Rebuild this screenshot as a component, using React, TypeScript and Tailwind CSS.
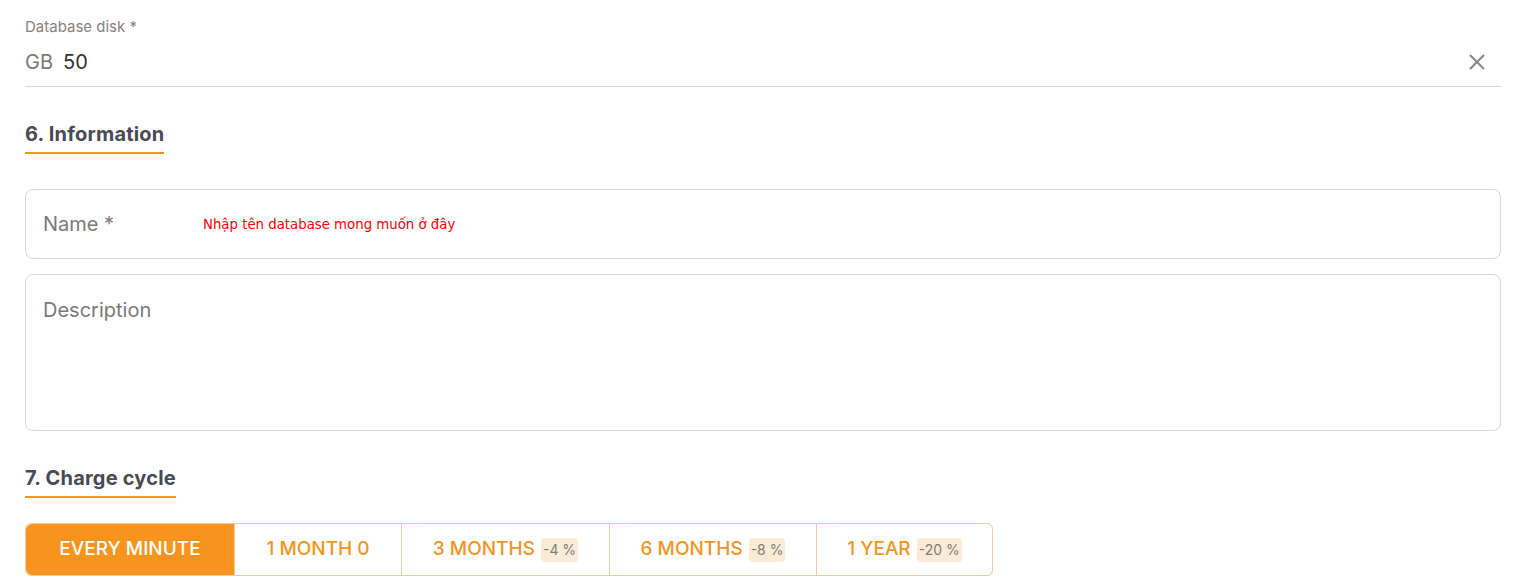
import React from "react";

const font = { fontFamily: "Inter, 'Noto Sans', sans-serif" };

function Tab({ label, badge, active, last }: { label: string; badge?: string; active?: boolean; last?: boolean }) {
  return (
    <div
      className={
        "flex items-center justify-center gap-[6px] h-full " +
        (active
          ? "bg-[#f7941d] text-white rounded-l-[6px]"
          : "text-[#f7941d] border-l border-[#f8c89a]") +
        (last ? " rounded-r-[6px]" : "")
      }
    >
      <span className="text-[19px] font-medium">{label}</span>
      {badge && (
        <span className="bg-[#fbebd6] text-[#7c7c7c] text-[14px] rounded-[4px] px-[2px] h-[24px] flex items-center">
          {badge}
        </span>
      )}
    </div>
  );
}

export default function App() {
  return (
    <div className="w-[1523px] h-[585px] bg-white overflow-hidden" style={font}>
      <div className="px-[25px] pr-[22px]">
        <div className="pt-[17px] text-[15px] text-[#8a8080] leading-[20px]">Database disk *</div>
        <div className="flex items-center h-[50px] border-b border-[#d6d6d6]">
          <span className="text-[20px] text-[#7a7a7a]">GB</span>
          <span className="text-[20px] text-[#333] ml-[10px]">50</span>
          <span className="ml-auto mr-[14px] text-[#888]">
            <svg width="20" height="20" viewBox="0 0 20 20" fill="none" stroke="currentColor" strokeWidth="2">
              <path d="M3 3L17 17M17 3L3 17" />
            </svg>
          </span>
        </div>

        <div className="mt-[33px]">
          <div className="inline-block">
            <div className="text-[20px] font-bold text-[#4a4a55] leading-[28px] tracking-[0.2px]">6. Information</div>
            <div className="h-[2px] bg-[#f7941d] mt-[4px]"></div>
          </div>
        </div>

        <div className="mt-[35px] h-[70px] border border-[#d9d9d9] rounded-[8px] flex items-center px-[17px]">
          <span className="text-[20px] text-[#7a7a7a] w-[160px]">Name *</span>
          <span className="text-[13.3px] text-[#ff0000] pt-[2px]" style={{ fontFamily: "'DejaVu Sans', sans-serif" }}>
            Nhập tên database mong muốn ở đây
          </span>
        </div>

        <div className="mt-[15px] h-[157px] border border-[#d9d9d9] rounded-[8px] px-[17px] pt-[20px]">
          <span className="text-[20px] text-[#7a7a7a]">Description</span>
        </div>

        <div className="mt-[33px]">
          <div className="inline-block">
            <div className="text-[20px] font-bold text-[#4a4a55] leading-[28px] tracking-[0.2px]">7. Charge cycle</div>
            <div className="h-[2px] bg-[#f7941d] mt-[4px]"></div>
          </div>
        </div>

        <div className="mt-[25px] w-[968px] h-[53px] border border-[#f8c89a] rounded-[6px] grid grid-cols-[208px_167px_208px_207px_1fr]">
          <Tab label="EVERY MINUTE" active />
          <Tab label="1 MONTH 0" />
          <Tab label="3 MONTHS" badge="-4 %" />
          <Tab label="6 MONTHS" badge="-8 %" />
          <Tab label="1 YEAR" badge="-20 %" last />
        </div>
      </div>
    </div>
  );
}
